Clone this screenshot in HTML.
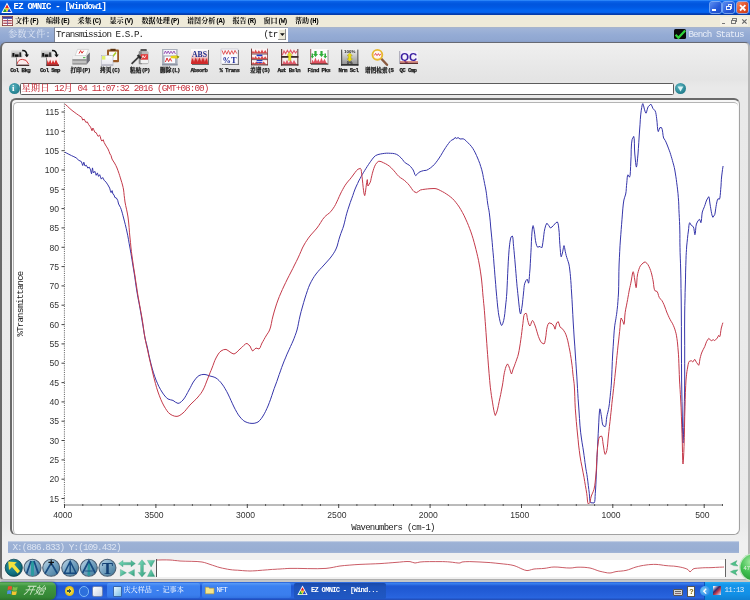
<!DOCTYPE html>
<html><head><meta charset="utf-8"><title>EZ OMNIC - [Window1]</title>
<style>
html,body{margin:0;padding:0}
body{width:750px;height:600px;overflow:hidden;position:relative;background:#c6c6c6;font-family:"Liberation Mono","Noto Serif CJK SC",monospace;}
.abs,#root div,#root span,#root svg{position:absolute}
#root{position:absolute;left:0;top:0;width:750px;height:600px;overflow:hidden;will-change:transform;opacity:0.9999}
#root span span{position:static}
.mono{font-family:"Liberation Mono","Noto Serif CJK SC",monospace}
.ax{font-family:"Liberation Sans",sans-serif;font-size:8.6px;fill:#333}
.t{white-space:nowrap;line-height:1}
.l{letter-spacing:-0.1em}
.mi .l{letter-spacing:-0.17em}
#title{left:0;top:0;width:750px;height:15px;background:linear-gradient(#3a94ff 0,#0a62e8 1.5px,#0055dd 4px,#0058e2 7px,#0466f2 11px,#0560ea 12.5px,#0038a8 14px,#0a3fae 15px)}
#menu{left:0;top:15px;width:750px;height:12px;background:#eeead9}
.mi{top:2.2px;font-size:7.1px;color:#000;white-space:nowrap;line-height:8px;font-weight:bold}
#param{left:0;top:27px;width:750px;height:23px;background:linear-gradient(#a8b4ca 0,#9fb3d7 2px,#94abd4 8px,#90a7d1 13px,#8499c3 16px)}
#main{left:0;top:42.3px;width:745.8px;height:536px;border-style:solid;border-color:#666973 #b6b6b6 #b0b0b0 #6a6a6a;border-width:1.8px 2px 1.6px 2px;border-radius:6px 5px 3px 4px;background:linear-gradient(#efefef 0,#e4e4e4 36px,#e9e9e9 44px,#ebebeb 480px,#f0f0f0 500px,#f0f0f0 100%)}
.tl{top:68px;font-size:5.7px;line-height:6px;font-weight:bold;color:#111;-webkit-text-stroke:0.25px #222;white-space:nowrap;transform-origin:0 0}
#panel{left:9.6px;top:98px;width:727.2px;height:434.4px;border-style:solid;border-color:#6a6a6a #a2a2a2 #a2a2a2 #6a6a6a;border-width:2px 1.3px 1.3px 2px;border-radius:6px;background:#f7f7f7}
#panel2{left:13.3px;top:102.3px;width:724.1px;height:430.7px;border-top:1.4px solid #b4b4b4;border-left:1.4px solid #b4b4b4;border-radius:4.5px;background:#fff}
#status{left:8px;top:540.6px;width:731px;height:12px;background:linear-gradient(#d0d9e8 0,#9cb1d5 1.6px,#98aed3 10px,#a4b6d6 12px)}
#task{left:0;top:581.6px;width:750px;height:18.4px;background:linear-gradient(#2a62d8 0,#3a80ee 1.6px,#2058d4 4px,#1f58d2 6px,#2762dc 14px,#2a66e0 16px,#1a48b8 17.3px,#4a72d0 18.4px)}
.tb{top:1.5px;height:15px;border-radius:2px;background:linear-gradient(#5a9cf8,#3c81f1 3px,#3a7eee 12px,#3272e0)}
.tbt{top:4.2px;font-size:7.1px;line-height:8px;color:#fff;white-space:nowrap}
</style></head><body><div id="root">

<div id="title">
 <svg style="left:1px;top:1.5px" width="12" height="12" viewBox="0 0 12 12"><polygon points="6,0.6 11.6,11 0.4,11" fill="#fff"/><polygon points="6,2.4 8,6.2 4,6.2" fill="#e02020"/><polygon points="4,6.2 6,10 1.9,10" fill="#22a030"/><polygon points="8,6.2 10.1,10 6,10" fill="#2040d0"/><polygon points="4,6.2 8,6.2 6,10" fill="#e8d020"/></svg>
 <span class="t" style="left:13.6px;top:3px;font-size:9px;font-weight:bold;color:#fff;letter-spacing:-0.78px">EZ OMNIC - [Window1]</span>
 <div style="left:709.5px;top:1.6px;width:11px;height:11.6px;border-radius:2px;background:linear-gradient(135deg,#5d8ef0,#2458d8 60%,#1e4cc4);box-shadow:0 0 0 0.7px #9fc0f8"><div style="left:2.4px;top:7.6px;width:4px;height:1.7px;background:#fff"></div></div>
 <div style="left:723.2px;top:1.6px;width:11px;height:11.6px;border-radius:2px;background:linear-gradient(135deg,#5d8ef0,#2458d8 60%,#1e4cc4);box-shadow:0 0 0 0.7px #9fc0f8"><div style="left:4.4px;top:2.6px;width:2.8px;height:2.4px;border:0.7px solid #dfe8fb;border-top-width:1.2px"></div><div style="left:2.8px;top:4.4px;width:2.8px;height:2.4px;border:0.7px solid #eef3fd;border-top-width:1.2px;background:#2c60dc"></div></div>
 <div style="left:737px;top:1.6px;width:11.4px;height:11.6px;border-radius:2px;background:linear-gradient(135deg,#f0906c,#e4532a 50%,#cc3c18);box-shadow:0 0 0 0.7px #c8c0e0"><svg style="left:0;top:0" width="11.4" height="11.6"><path d="M3,3.1 L8.4,8.5 M8.4,3.1 L3,8.5" stroke="#fff" stroke-width="1.8"/></svg></div>
</div>

<div id="menu">
 <svg style="left:1.5px;top:1px" width="11" height="10" viewBox="0 0 11 10"><rect x="0.3" y="0.3" width="10.4" height="9.4" fill="#fff" stroke="#7a2a2a" stroke-width="0.9"/><rect x="0.8" y="0.8" width="9.4" height="2" fill="#3b3f9e"/><rect x="1.2" y="4" width="8.6" height="1.3" fill="#b24a58"/><rect x="1.2" y="6.6" width="8.6" height="1.3" fill="#b24a58"/><line x1="5.5" y1="3" x2="5.5" y2="9.4" stroke="#7a5a90" stroke-width="0.8"/></svg>
 <span class="mi" style="left:15px">文件<span class="l">(F)</span></span>
 <span class="mi" style="left:46px">编辑<span class="l">(E)</span></span>
 <span class="mi" style="left:77.5px">采集<span class="l">(C)</span></span>
 <span class="mi" style="left:109.5px">显示<span class="l">(V)</span></span>
 <span class="mi" style="left:141.5px">数据处理<span class="l">(P)</span></span>
 <span class="mi" style="left:187px">谱图分析<span class="l">(A)</span></span>
 <span class="mi" style="left:232.5px">报告<span class="l">(R)</span></span>
 <span class="mi" style="left:263.5px">窗口<span class="l">(W)</span></span>
 <span class="mi" style="left:295px">帮助<span class="l">(H)</span></span>
 <div style="left:720px;top:1.5px;width:28px;height:9px;background:#f4f1e6"></div>
 <div style="left:721.6px;top:7.6px;width:3.4px;height:1.2px;background:#777"></div>
 <div style="left:732.4px;top:3px;width:2.8px;height:2.2px;border:0.7px solid #777;border-top-width:1.2px"></div>
 <div style="left:731px;top:4.6px;width:2.8px;height:2.2px;border:0.7px solid #777;border-top-width:1.2px;background:#f4f1e6"></div>
 <svg style="left:740.5px;top:2.6px" width="7" height="7"><path d="M1.2,1.4 L5.6,5.6 M5.6,1.4 L1.2,5.6" stroke="#666" stroke-width="1.2"/></svg>
</div>

<div id="param">
 <span class="t" style="left:8px;top:2.6px;font-size:9.3px;color:#dfe7f5">参数文件<span class="l">:</span></span>
 <div style="left:53.5px;top:-0.2px;width:233.5px;height:13.8px;background:#fff;border-top:0.8px solid #9aa0ac;border-left:0.8px solid #7b8396"></div>
 <span class="t" style="left:56px;top:3.2px;font-size:9.2px;color:#1a1a1a;letter-spacing:-0.93px">Transmission E.S.P.</span>
 <span class="t" style="left:263.5px;top:3.2px;font-size:9.2px;color:#1a1a1a;letter-spacing:-0.93px">(tr</span>
 <div style="left:277.8px;top:1.6px;width:8.6px;height:11px;background:#ece9d8;box-shadow:inset -0.8px -0.8px 0 #777,inset 0.8px 0.8px 0 #fff"><svg style="left:0;top:0" width="9" height="11"><polygon points="2,4.3 6.8,4.3 4.4,7" fill="#111"/></svg></div>
 <div style="left:673.5px;top:1.8px;width:12.6px;height:10.6px;background:#0a0a0a;border-radius:1.5px"><svg style="left:0;top:0" width="13" height="11"><path d="M1.6,5.8 L4.4,8.8 L11.2,1.4" stroke="#2fd23a" stroke-width="2.2" fill="none"/></svg></div>
 <span class="t" style="left:688.5px;top:3px;font-size:9.2px;color:#e9eef8;letter-spacing:-0.93px">Bench Status</span>
</div>

<div id="main"></div>
<svg style="left:0;top:44px" width="440" height="34" viewBox="0 44 440 34">
<defs>
<linearGradient id="gg" x1="0" y1="0" x2="0" y2="1"><stop offset="0" stop-color="#f2f2f2"/><stop offset="1" stop-color="#8a8a8a"/></linearGradient>
<linearGradient id="rg" x1="0" y1="0" x2="0" y2="1"><stop offset="0" stop-color="#ffffff"/><stop offset="0.5" stop-color="#f4d8d8"/><stop offset="1" stop-color="#d23a3a"/></linearGradient>
<linearGradient id="wg" x1="0" y1="0" x2="0" y2="1"><stop offset="0" stop-color="#ffffff"/><stop offset="1" stop-color="#e4e4ec"/></linearGradient>
</defs>
<!-- 1 Col Bkg -->
<g>
<rect x="11.2" y="49" width="11" height="8.4" fill="url(#gg)"/><rect x="12.4" y="53" width="2" height="3.6" fill="#111"/><rect x="15" y="54.4" width="3.6" height="2.4" fill="#111"/><rect x="19.4" y="52.4" width="1.6" height="4.4" fill="#222"/>
<path d="M22.2,50.6 Q26.6,50.2 26.8,55" stroke="#111" stroke-width="1.6" fill="none"/><polygon points="24.6,54.4 29,54.4 26.8,57.6" fill="#111"/>
<rect x="16.2" y="57.4" width="13" height="8" fill="#fbeaea"/><path d="M17,64 Q18.5,59 22.5,59.4 Q26.5,59 28.6,64" stroke="#d03a3a" stroke-width="1" fill="none"/><rect x="16.2" y="64.6" width="13" height="1.4" fill="#4a3030"/><rect x="16.2" y="57.4" width="0.8" height="8.6" fill="#666"/>
</g>
<!-- 2 Col Smp -->
<g>
<rect x="41" y="49" width="11" height="8.4" fill="url(#gg)"/><rect x="42.2" y="53" width="2" height="3.6" fill="#111"/><rect x="44.8" y="54.4" width="3.6" height="2.4" fill="#111"/><rect x="49.2" y="52.4" width="1.6" height="4.4" fill="#222"/>
<path d="M52,50.6 Q56.4,50.2 56.6,55" stroke="#111" stroke-width="1.6" fill="none"/><polygon points="54.4,54.4 58.8,54.4 56.6,57.6" fill="#111"/>
<rect x="46" y="57.4" width="13" height="8" fill="#fbeaea"/><polygon points="46.6,64.8 47.6,60 48.8,63 50.2,59.4 51.6,63.4 53,60 54.4,63 56,59.6 57.4,62.6 58.6,64.8" fill="#d42a2a"/><rect x="46" y="64.4" width="13" height="1.6" fill="#7a2020"/><rect x="46" y="57.4" width="0.8" height="8.6" fill="#666"/>
</g>
<!-- 3 print -->
<g>
<polygon points="77.6,49.4 88.4,49.4 86,55.6 75.2,55.6" fill="#fdfdfd" stroke="#aaa" stroke-width="0.4"/><path d="M79,53.6 L80.6,50.6 L82,53.2 L83.6,50.8" stroke="#d83030" stroke-width="1" fill="none"/>
<polygon points="72.4,56 86.6,56 89.8,52.6 89.8,60.4 86.6,64.6 72.4,64.6" fill="#c9c9c9"/><rect x="72.4" y="56" width="14.2" height="3" fill="#f0f0f0"/><rect x="72.4" y="59" width="14.2" height="5.6" fill="#9c9c9c"/><rect x="72.4" y="61.4" width="14.2" height="1.2" fill="#d8d8d8"/><polygon points="86.6,56 89.8,52.6 89.8,60.4 86.6,64.6" fill="#6f6f78"/><rect x="83" y="57" width="2.4" height="1.2" fill="#58c058"/>
</g>
<!-- 4 copy -->
<g>
<rect x="107" y="49.6" width="12" height="12.6" rx="1" fill="#9a5a24"/><rect x="110.4" y="48.8" width="5.2" height="2" fill="#5a3410"/><rect x="109" y="51.6" width="8.2" height="8.4" fill="#fbfbfb"/><path d="M109.6,55.4 L112,57.4 L116,52.6" stroke="#a8d020" stroke-width="1.6" fill="none"/>
<rect x="101.4" y="55.4" width="11.6" height="10.4" fill="url(#wg)" stroke="#a8a8b8" stroke-width="0.5"/><rect x="102" y="56" width="3.4" height="3.6" fill="#dff06a"/><rect x="101.4" y="64.2" width="11.6" height="1.6" fill="#b8b8c4"/>
</g>
<!-- 5 paste -->
<g>
<rect x="140.4" y="49" width="6.4" height="2.6" rx="0.8" fill="#555"/><rect x="138.8" y="51.2" width="9.8" height="13" rx="1.4" fill="#b9b9b9"/><rect x="138.8" y="51.2" width="3" height="13" fill="#8c8c8c"/><rect x="140.6" y="54.2" width="7.4" height="5.6" fill="#e23a3a"/><path d="M141.6,58.6 L143,55.6 L144.4,58 L146,55.4" stroke="#fff" stroke-width="0.8" fill="none"/><rect x="140.6" y="59.8" width="7.4" height="3.2" fill="#f2f2f2"/>
<path d="M131.6,63.8 L139.6,56.2" stroke="#3c3c3c" stroke-width="1.8"/><path d="M137.6,55 L141,58.4" stroke="#2c2c2c" stroke-width="2.2"/>
</g>
<!-- 6 delete -->
<g>
<rect x="162" y="49" width="15.6" height="16.4" fill="#aab0bc"/><rect x="163.4" y="50" width="12.8" height="5.4" fill="#f4f4fa"/><path d="M164,54 L165.4,51 L166.8,53.6 L168.2,51 L169.6,53.8 L171,51.2 L172.4,53.6 L174,51 L175.4,54" stroke="#8a3aa8" stroke-width="0.8" fill="none"/>
<rect x="164.6" y="56.6" width="10.4" height="6.6" fill="#fbfbff"/><path d="M165.4,62 L167,58 L168.6,61.6 L170.2,58.4 L171.6,61.4" stroke="#e03030" stroke-width="1" fill="none"/><rect x="162" y="63.8" width="15.6" height="1.6" fill="#8e94a4"/>
<polygon points="170.6,56 177.4,55.4 179.4,56.8 177.6,58.4 170.8,58.2" fill="#e8d21a"/><polygon points="176.6,55.4 179.4,56.8 177.6,58.4" fill="#7a8a20"/>
</g>
<!-- 7 ABS -->
<g>
<rect x="192" y="50" width="17" height="15" fill="#6a6a6a"/><rect x="191" y="49" width="17" height="15" fill="url(#rg)"/>
<polygon points="191,64 192.4,58 194,62 195.8,57.4 197.6,62 199.4,57.6 201.2,62 203,57.4 204.8,62 206.6,58 208,64" fill="#d02a2a"/>
<text x="199.5" y="57" text-anchor="middle" font-family="Liberation Serif,serif" font-weight="bold" font-size="7.8" fill="#1c2a8a" textLength="15" lengthAdjust="spacingAndGlyphs">ABS</text>
</g>
<!-- 8 %T -->
<g>
<rect x="222" y="50" width="17" height="15" fill="#6a6a6a"/><rect x="221" y="49" width="17" height="15" fill="#fafafc" stroke="#b0b0c0" stroke-width="0.5"/>
<path d="M222,50.4 L223.6,54.4 L225.2,50.6 L226.8,54.2 L228.4,50.4 L230,54.4 L231.8,50.6 L233.4,54.2 L235,50.4 L236.8,53.6" stroke="#e04848" stroke-width="0.9" fill="none"/>
<text x="229.6" y="63" text-anchor="middle" font-family="Liberation Serif,serif" font-weight="bold" font-size="9" fill="#1c2a9a" textLength="14" lengthAdjust="spacingAndGlyphs">%T</text>
</g>
<!-- 9 subtract -->
<g>
<rect x="251" y="48.6" width="17" height="16.6" fill="#fbf4f4"/><rect x="251" y="48.6" width="1" height="16.6" fill="#7a4040"/><rect x="267" y="48.6" width="1" height="16.6" fill="#a06060"/>
<g fill="#d84a4a"><polygon points="251.6,53.6 252.8,50.4 254.2,52.4 255.6,49.6 257.2,52.6 258.8,50.2 260.4,52.6 262,49.4 263.6,52.4 265.2,50 266.6,52.2 267.4,53.6"/><polygon points="251.6,59.2 252.8,56.4 254.2,58.2 255.6,56 257.2,58.4 258.8,56.4 260.4,58.4 262,55.8 263.6,58.2 265.2,56.2 267.4,59.2"/><polygon points="251.6,64.6 253,62 254.6,63.6 256.4,61.4 258.2,63.6 260,61.8 262,63.6 263.6,61.4 265.4,63.4 267.4,64.6"/></g>
<rect x="251" y="53.6" width="17" height="0.9" fill="#6a4a4a"/><rect x="251" y="59.2" width="17" height="0.9" fill="#6a4a4a"/><rect x="251" y="64.4" width="17" height="1" fill="#5a3030"/>
<rect x="256.6" y="54.6" width="5.8" height="1.6" fill="#2038c8"/><rect x="256.6" y="60" width="5.8" height="1" fill="#2038c8"/><rect x="256.6" y="61.8" width="5.8" height="1" fill="#2038c8"/>
</g>
<!-- 10 Aut Bsln -->
<g>
<rect x="281" y="49" width="17.4" height="16.6" fill="#f6eeee"/><rect x="281" y="49" width="1.2" height="16.6" fill="#6a4040"/><rect x="297.2" y="49" width="1.2" height="16.6" fill="#6a5050"/>
<path d="M282.4,55 L284,51 L285.6,53.6 L287.4,50.4 L289,53 L290.6,50.2 L292.4,53.4 L294,50.6 L295.6,53 L297,51" stroke="#e05a6a" stroke-width="1.1" fill="none"/>
<rect x="281" y="56" width="17.4" height="1.8" fill="#3a2a2a"/>
<polygon points="282.4,64.6 283.8,60.4 285.4,63 287,59.8 288.8,63.2 290.6,59.6 292.4,63 294,60 295.6,62.8 297,64.6" fill="#e05a6a"/>
<rect x="281" y="64.2" width="17.4" height="1.4" fill="#5a2a2a"/>
<polygon points="289.6,52 292.4,55.4 291,55.4 291,60.6 288.4,60.6 288.4,55.4 287,55.4" fill="#e8e020" stroke="#a8a020" stroke-width="0.3"/>
</g>
<!-- 11 Find Pks -->
<g>
<rect x="311" y="50" width="17.4" height="15" fill="#777"/><rect x="310.2" y="49" width="17.4" height="15" fill="#fdfbfb"/><rect x="310.2" y="49" width="1" height="15" fill="#8a5a5a"/>
<polygon points="311.2,64 312.4,59.6 313.8,62 315.4,57.6 317,61.6 318.4,59 319.8,62 321.4,57.4 323,61.6 324.6,58.8 326,62 327.4,64" fill="#e05060"/>
<g fill="#2fae3a"><polygon points="314.4,51 316.6,51 316.6,54 318,54 315.5,57 313,54 314.4,54"/><polygon points="320.4,51 322.6,51 322.6,54 324,54 321.5,57 319,54 320.4,54"/><polygon points="324.4,53.4 326,53.4 326,56 327.2,56 325.2,58.4 323.4,56 324.4,56"/><polygon points="311.6,53.4 313,53.4 313,56 314,56 312.3,58.4 310.8,56 311.6,56"/></g>
<rect x="310.2" y="63" width="17.4" height="1" fill="#8a3a3a"/>
</g>
<!-- 12 Nrm Scl -->
<g>
<rect x="341" y="49.6" width="17.4" height="16" fill="url(#gg)"/><rect x="341" y="49.6" width="1.2" height="16" fill="#555"/><rect x="357.2" y="49.6" width="1.2" height="16" fill="#666"/><rect x="341" y="64" width="17.4" height="1.6" fill="#333"/>
<text x="349.7" y="52.6" text-anchor="middle" font-family="Liberation Sans,sans-serif" font-weight="bold" font-size="4.4" fill="#222">100%</text>
<text x="349.7" y="64.4" text-anchor="middle" font-family="Liberation Sans,sans-serif" font-weight="bold" font-size="4" fill="#222">0%</text>
<polygon points="349.7,53 352.4,55.6 351,55.6 351,58.8 352.4,58.8 349.7,61.6 347,58.8 348.4,58.8 348.4,55.6 347,55.6" fill="#f0e010" stroke="#a09010" stroke-width="0.4"/>
</g>
<!-- 13 search -->
<g>
<path d="M381.6,59 L387,64.8" stroke="#8a5a40" stroke-width="2.4" stroke-linecap="round"/>
<circle cx="377.4" cy="54.8" r="4.9" fill="#fff6f2" stroke="#e8b830" stroke-width="1.9"/>
<path d="M374.4,55.4 L375.6,53.4 L377,55.6 L378.4,53.6 L379.6,55.6 L380.8,53.8" stroke="#e03a4a" stroke-width="0.9" fill="none"/>

</g>
<!-- 14 QC -->
<g>
<rect x="399.4" y="51" width="18.6" height="13" fill="#f4f0fa"/><rect x="399.4" y="51" width="0.8" height="13" fill="#8a8a9a"/>
<text x="408.8" y="61.2" text-anchor="middle" font-family="Liberation Sans,sans-serif" font-weight="bold" font-size="11.6" fill="#3a1ea0" textLength="17" lengthAdjust="spacingAndGlyphs">QC</text>
<rect x="400" y="61.4" width="18" height="1.2" fill="#c8503a"/><rect x="400" y="62.8" width="18" height="1.2" fill="#5a3030"/>
</g>
</svg>
<span class="tl" style="left:10.2px"><span class="l">Col Bkg</span></span>
<span class="tl" style="left:40px"><span class="l">Col Smp</span></span>
<span class="tl" style="left:70.4px">打印<span class="l">(P)</span></span>
<span class="tl" style="left:100px">拷贝<span class="l">(C)</span></span>
<span class="tl" style="left:130px">粘贴<span class="l">(P)</span></span>
<span class="tl" style="left:160px">删除<span class="l">(L)</span></span>
<span class="tl" style="left:190.4px"><span class="l">Absorb</span></span>
<span class="tl" style="left:219.4px"><span class="l">% Trans</span></span>
<span class="tl" style="left:250px">差谱<span class="l">(S)</span></span>
<span class="tl" style="left:277.4px"><span class="l">Aut Bsln</span></span>
<span class="tl" style="left:307.4px"><span class="l">Find Pks</span></span>
<span class="tl" style="left:338.4px"><span class="l">Nrm Scl</span></span>
<span class="tl" style="left:365px">谱图检索<span class="l">(S</span></span>
<span class="tl" style="left:399.4px"><span class="l">QC Cmp</span></span>


<div style="left:8.6px;top:82.6px;width:11px;height:11px;border-radius:6px;background:radial-gradient(circle at 40% 35%,#5ab4c0,#2a8796 60%,#1c6a78)"><span class="t" style="left:3.4px;top:1px;font-size:9px;font-weight:bold;color:#fff;font-family:'Liberation Serif',serif">i</span></div>
<div style="left:20.4px;top:83px;width:651.6px;height:9.8px;background:#fff;border:1px solid #5c5c5c;border-radius:1.5px"></div>
<span class="t" style="left:21.5px;top:84px;font-size:9.35px;font-weight:500;color:#c8323e">星期日<span class="l"> 12</span>月<span class="l"> 04 11:07:32 2016 (GMT+08:00)</span></span>
<div style="left:674.8px;top:82.8px;width:11px;height:11px;border-radius:6px;background:radial-gradient(circle at 40% 35%,#62b8c2,#2a8796 60%,#1c6a78)"><svg style="left:0;top:0" width="11" height="11"><polygon points="2.6,3.6 8.4,3.6 5.5,8.4" fill="#d9f4f6"/></svg></div>

<div id="panel"></div><div id="panel2"></div>

<div id="status"><span class="t" style="left:4.4px;top:2.2px;font-size:9.4px;color:#dde5f3;letter-spacing:-0.92px">X:(886.833) Y:(109.432)</span></div>

<div style="left:156px;top:559px;width:1px;height:18px;background:#555"></div>
<div style="left:157px;top:559.5px;width:568px;height:17px;background:#fff"></div>
<div style="left:725px;top:559px;width:1px;height:18px;background:#666"></div>
<svg style="left:0;top:555px" width="160" height="26" viewBox="0 555 160 26">
<defs>
<radialGradient id="bg1" cx="0.4" cy="0.35" r="0.7"><stop offset="0" stop-color="#2e97a6"/><stop offset="0.7" stop-color="#0f6f7e"/><stop offset="1" stop-color="#0a4f5c"/></radialGradient>
<linearGradient id="bg2" x1="0" y1="0" x2="1" y2="1"><stop offset="0" stop-color="#c4dcea"/><stop offset="0.45" stop-color="#7aa6c4"/><stop offset="1" stop-color="#3a7496"/></linearGradient>
<linearGradient id="gr" x1="0" y1="0" x2="1" y2="1"><stop offset="0" stop-color="#7fe0c0"/><stop offset="1" stop-color="#2f9a7a"/></linearGradient>
</defs>
<circle cx="13.8" cy="567.8" r="8.6" fill="url(#bg1)" stroke="#0a4450" stroke-width="0.8"/>
<polygon points="8.2,561.6 16.8,562.2 14.4,564.6 20,571 17.6,573.4 12,567 9,570" fill="#f4e23c"/>
<g stroke="#4a5e72" stroke-width="1.1">
<circle cx="32.5" cy="567.8" r="8.5" fill="url(#bg2)"/><circle cx="51.2" cy="567.8" r="8.5" fill="url(#bg2)"/><circle cx="70.2" cy="567.8" r="8.5" fill="url(#bg2)"/><circle cx="88.8" cy="567.8" r="8.5" fill="url(#bg2)"/><circle cx="107.4" cy="567.8" r="8.5" fill="url(#bg2)"/>
</g>
<rect x="31" y="561" width="3" height="14.6" fill="#2a9aa0"/>
<path d="M26.6,573.6 L31,561 M34,561 L38.4,573.6" stroke="#174a80" stroke-width="1.7" fill="none"/>
<path d="M45,573.6 L51.2,563 L57.4,573.6" stroke="#174a80" stroke-width="1.7" fill="none"/>
<path d="M48.4,562.4 L54,562.4 M51.2,559.8 L51.2,565.2" stroke="#111" stroke-width="1.1"/>
<path d="M64.4,573 L70.2,561.4 L76,573 M70.2,561.4 L70.2,573 M63.6,573.2 L76.8,573.2" stroke="#174a80" stroke-width="1.5" fill="none"/>
<rect x="87.6" y="562" width="2.6" height="13.6" fill="#2a9aa0"/>
<path d="M82.6,573 L88.9,560.8 L95.2,573" stroke="#174a80" stroke-width="1.7" fill="none"/><path d="M85,571 L92.8,571" stroke="#1a4f86" stroke-width="0.9"/>
<text x="107.4" y="573.6" text-anchor="middle" font-family="Liberation Serif,serif" font-weight="bold" font-size="16.5" fill="#123f74">T</text>
<g fill="url(#gr)" stroke="#2a8a6a" stroke-width="0.3">
<polygon points="118.6,563.6 123,560.4 123,562.4 131,562.4 131,560.4 135.4,563.6 131,566.8 131,564.8 123,564.8 123,566.8"/>
<polygon points="120.4,569.4 126.4,572.8 120.4,576.2"/><polygon points="134.4,569.4 128.4,572.8 134.4,576.2"/>
<polygon points="142,559.8 145.8,564.4 143.4,564.4 143.4,572.4 145.8,572.4 142,577 138.2,572.4 140.6,572.4 140.6,564.4 138.2,564.4"/>
<polygon points="147.4,560.4 154.8,560.4 151.1,567"/><polygon points="147.4,576.4 154.8,576.4 151.1,569.6"/>
</g>
</svg>
<svg style="left:726px;top:552px" width="24" height="30" viewBox="726 552 24 30">
<defs><radialGradient id="gb" cx="0.4" cy="0.3" r="0.8"><stop offset="0" stop-color="#9fe89f"/><stop offset="0.5" stop-color="#3fbf4f"/><stop offset="1" stop-color="#1f8f2f"/></radialGradient></defs>
<g fill="#4fc08a" stroke="#2a8a5a" stroke-width="0.3"><polygon points="730.4,564 737,560.6 735.6,563.4 738,566 733.6,565.6"/><polygon points="730.4,571.8 737,575.2 735.6,572.4 738,569.8 733.6,570.2"/></g>
<circle cx="753.4" cy="567.3" r="13.6" fill="url(#gb)" stroke="#c4e8c4" stroke-width="1.3"/>
<text x="746.8" y="569.6" text-anchor="middle" font-family="Liberation Sans,sans-serif" font-size="5.8" fill="#e4f2e4">47</text>
</svg>


<svg id="chart" width="750" height="600" viewBox="0 0 750 600">
<line x1="64.4" y1="103.5" x2="64.4" y2="506" stroke="#666" stroke-width="1" stroke-dasharray="1.1,1.1"/>
<line x1="64" y1="505" x2="723" y2="505" stroke="#777" stroke-width="1"/>
<line x1="61.5" y1="498.5" x2="64.5" y2="498.5" stroke="#444" stroke-width="1"/><text x="59" y="501.7" text-anchor="end" class="ax">15</text><line x1="61.5" y1="479.2" x2="64.5" y2="479.2" stroke="#444" stroke-width="1"/><text x="59" y="482.4" text-anchor="end" class="ax">20</text><line x1="61.5" y1="459.9" x2="64.5" y2="459.9" stroke="#444" stroke-width="1"/><text x="59" y="463.1" text-anchor="end" class="ax">25</text><line x1="61.5" y1="440.5" x2="64.5" y2="440.5" stroke="#444" stroke-width="1"/><text x="59" y="443.7" text-anchor="end" class="ax">30</text><line x1="61.5" y1="421.2" x2="64.5" y2="421.2" stroke="#444" stroke-width="1"/><text x="59" y="424.4" text-anchor="end" class="ax">35</text><line x1="61.5" y1="401.9" x2="64.5" y2="401.9" stroke="#444" stroke-width="1"/><text x="59" y="405.1" text-anchor="end" class="ax">40</text><line x1="61.5" y1="382.6" x2="64.5" y2="382.6" stroke="#444" stroke-width="1"/><text x="59" y="385.8" text-anchor="end" class="ax">45</text><line x1="61.5" y1="363.2" x2="64.5" y2="363.2" stroke="#444" stroke-width="1"/><text x="59" y="366.4" text-anchor="end" class="ax">50</text><line x1="61.5" y1="343.9" x2="64.5" y2="343.9" stroke="#444" stroke-width="1"/><text x="59" y="347.1" text-anchor="end" class="ax">55</text><line x1="61.5" y1="324.6" x2="64.5" y2="324.6" stroke="#444" stroke-width="1"/><text x="59" y="327.8" text-anchor="end" class="ax">60</text><line x1="61.5" y1="305.2" x2="64.5" y2="305.2" stroke="#444" stroke-width="1"/><text x="59" y="308.4" text-anchor="end" class="ax">65</text><line x1="61.5" y1="285.9" x2="64.5" y2="285.9" stroke="#444" stroke-width="1"/><text x="59" y="289.1" text-anchor="end" class="ax">70</text><line x1="61.5" y1="266.6" x2="64.5" y2="266.6" stroke="#444" stroke-width="1"/><text x="59" y="269.8" text-anchor="end" class="ax">75</text><line x1="61.5" y1="247.3" x2="64.5" y2="247.3" stroke="#444" stroke-width="1"/><text x="59" y="250.5" text-anchor="end" class="ax">80</text><line x1="61.5" y1="227.9" x2="64.5" y2="227.9" stroke="#444" stroke-width="1"/><text x="59" y="231.1" text-anchor="end" class="ax">85</text><line x1="61.5" y1="208.6" x2="64.5" y2="208.6" stroke="#444" stroke-width="1"/><text x="59" y="211.8" text-anchor="end" class="ax">90</text><line x1="61.5" y1="189.3" x2="64.5" y2="189.3" stroke="#444" stroke-width="1"/><text x="59" y="192.5" text-anchor="end" class="ax">95</text><line x1="61.5" y1="170.0" x2="64.5" y2="170.0" stroke="#444" stroke-width="1"/><text x="59" y="173.2" text-anchor="end" class="ax">100</text><line x1="61.5" y1="150.7" x2="64.5" y2="150.7" stroke="#444" stroke-width="1"/><text x="59" y="153.8" text-anchor="end" class="ax">105</text><line x1="61.5" y1="131.3" x2="64.5" y2="131.3" stroke="#444" stroke-width="1"/><text x="59" y="134.5" text-anchor="end" class="ax">110</text><line x1="61.5" y1="112.0" x2="64.5" y2="112.0" stroke="#444" stroke-width="1"/><text x="59" y="115.2" text-anchor="end" class="ax">115</text><line x1="64.5" y1="504" x2="64.5" y2="508" stroke="#444" stroke-width="1"/><text x="62.7" y="517.5" text-anchor="middle" class="ax">4000</text><line x1="82.8" y1="504" x2="82.8" y2="506" stroke="#555" stroke-width="1"/><line x1="101.1" y1="504" x2="101.1" y2="506" stroke="#555" stroke-width="1"/><line x1="119.3" y1="504" x2="119.3" y2="506" stroke="#555" stroke-width="1"/><line x1="137.6" y1="504" x2="137.6" y2="506" stroke="#555" stroke-width="1"/><line x1="155.9" y1="504" x2="155.9" y2="508" stroke="#444" stroke-width="1"/><text x="154.1" y="517.5" text-anchor="middle" class="ax">3500</text><line x1="174.2" y1="504" x2="174.2" y2="506" stroke="#555" stroke-width="1"/><line x1="192.4" y1="504" x2="192.4" y2="506" stroke="#555" stroke-width="1"/><line x1="210.7" y1="504" x2="210.7" y2="506" stroke="#555" stroke-width="1"/><line x1="229.0" y1="504" x2="229.0" y2="506" stroke="#555" stroke-width="1"/><line x1="247.3" y1="504" x2="247.3" y2="508" stroke="#444" stroke-width="1"/><text x="245.5" y="517.5" text-anchor="middle" class="ax">3000</text><line x1="265.6" y1="504" x2="265.6" y2="506" stroke="#555" stroke-width="1"/><line x1="283.8" y1="504" x2="283.8" y2="506" stroke="#555" stroke-width="1"/><line x1="302.1" y1="504" x2="302.1" y2="506" stroke="#555" stroke-width="1"/><line x1="320.4" y1="504" x2="320.4" y2="506" stroke="#555" stroke-width="1"/><line x1="338.7" y1="504" x2="338.7" y2="508" stroke="#444" stroke-width="1"/><text x="336.9" y="517.5" text-anchor="middle" class="ax">2500</text><line x1="356.9" y1="504" x2="356.9" y2="506" stroke="#555" stroke-width="1"/><line x1="375.2" y1="504" x2="375.2" y2="506" stroke="#555" stroke-width="1"/><line x1="393.5" y1="504" x2="393.5" y2="506" stroke="#555" stroke-width="1"/><line x1="411.8" y1="504" x2="411.8" y2="506" stroke="#555" stroke-width="1"/><line x1="430.1" y1="504" x2="430.1" y2="508" stroke="#444" stroke-width="1"/><text x="428.3" y="517.5" text-anchor="middle" class="ax">2000</text><line x1="448.3" y1="504" x2="448.3" y2="506" stroke="#555" stroke-width="1"/><line x1="466.6" y1="504" x2="466.6" y2="506" stroke="#555" stroke-width="1"/><line x1="484.9" y1="504" x2="484.9" y2="506" stroke="#555" stroke-width="1"/><line x1="503.2" y1="504" x2="503.2" y2="506" stroke="#555" stroke-width="1"/><line x1="521.5" y1="504" x2="521.5" y2="508" stroke="#444" stroke-width="1"/><text x="519.7" y="517.5" text-anchor="middle" class="ax">1500</text><line x1="539.7" y1="504" x2="539.7" y2="506" stroke="#555" stroke-width="1"/><line x1="558.0" y1="504" x2="558.0" y2="506" stroke="#555" stroke-width="1"/><line x1="576.3" y1="504" x2="576.3" y2="506" stroke="#555" stroke-width="1"/><line x1="594.6" y1="504" x2="594.6" y2="506" stroke="#555" stroke-width="1"/><line x1="612.8" y1="504" x2="612.8" y2="508" stroke="#444" stroke-width="1"/><text x="611.0" y="517.5" text-anchor="middle" class="ax">1000</text><line x1="631.1" y1="504" x2="631.1" y2="506" stroke="#555" stroke-width="1"/><line x1="649.4" y1="504" x2="649.4" y2="506" stroke="#555" stroke-width="1"/><line x1="667.7" y1="504" x2="667.7" y2="506" stroke="#555" stroke-width="1"/><line x1="686.0" y1="504" x2="686.0" y2="506" stroke="#555" stroke-width="1"/><line x1="704.2" y1="504" x2="704.2" y2="508" stroke="#444" stroke-width="1"/><text x="702.4" y="517.5" text-anchor="middle" class="ax">500</text><line x1="722.5" y1="504" x2="722.5" y2="506" stroke="#555" stroke-width="1"/>
<polyline points="65.0,152.3 66.2,152.9 68.9,154.3 71.5,155.6 73.9,156.7 76.1,157.8 78.9,160.4 81.3,161.5 82.1,163.8 82.7,165.5 83.8,162.2 85.0,166.0 86.4,165.3 87.8,168.1 89.2,167.1 90.6,169.9 91.1,172.3 91.5,173.8 92.0,170.8 92.5,167.9 92.9,170.4 93.4,173.0 94.8,171.3 95.5,173.3 96.2,175.3 97.4,172.9 98.5,176.4 99.7,174.7 100.5,176.9 101.3,179.1 102.7,177.5 104.1,180.2 106.0,182.1 107.9,184.9 109.7,188.1 110.4,190.8 111.1,192.6 112.1,190.6 113.0,194.2 113.9,194.7 114.9,197.5 116.3,197.9 117.7,200.3 118.6,204.0 120.5,207.5 121.3,209.7 122.0,212.0 122.5,213.8 123.0,215.8 123.6,218.0 124.4,221.1 125.3,224.6 126.2,228.3 127.0,232.0 127.8,235.8 128.5,239.7 129.2,243.7 130.0,248.0 131.0,253.7 132.0,259.8 133.0,266.0 134.0,272.0 134.8,277.1 135.5,282.1 136.2,287.0 137.0,292.0 137.9,297.4 139.0,302.9 140.0,308.4 141.0,314.0 142.0,320.2 143.1,326.7 144.1,332.9 145.0,338.0 145.5,340.2 146.0,342.1 146.5,343.9 147.0,346.0 147.9,350.0 148.8,354.6 149.9,359.4 151.0,364.0 152.1,368.1 153.3,372.2 154.6,376.2 156.0,380.0 157.4,383.2 158.8,386.4 160.4,389.3 162.0,392.0 163.4,394.1 164.9,396.0 166.4,397.7 168.0,399.0 170.5,399.8 173.0,400.4 175.5,402.2 178.0,403.4 179.7,402.9 181.4,401.6 183.0,400.0 184.6,397.9 186.1,395.4 187.6,392.6 189.0,390.0 190.3,387.7 191.5,385.3 192.7,383.0 194.0,381.0 195.6,378.9 197.2,377.0 199.0,375.6 201.4,374.7 204.0,374.4 206.0,374.7 208.0,375.3 210.0,376.0 212.0,376.5 214.1,377.1 216.0,378.0 217.6,379.2 219.1,380.6 220.6,382.2 222.0,384.0 223.6,386.2 225.1,388.7 226.6,391.3 228.0,394.0 229.5,397.2 231.0,400.5 232.5,403.8 234.0,407.0 235.4,409.7 236.9,412.4 238.4,414.9 240.0,417.0 241.6,418.8 243.2,420.4 245.0,421.6 247.2,422.5 249.6,423.2 252.0,423.4 254.1,423.3 256.1,422.8 258.0,422.0 259.8,420.4 261.5,418.3 263.0,416.0 264.3,413.8 265.6,411.3 266.8,408.7 268.0,406.0 269.3,402.7 270.6,399.2 271.8,395.6 273.0,392.0 274.2,388.5 275.5,385.0 276.8,381.5 278.0,378.0 279.2,374.5 280.5,370.9 281.7,367.4 283.0,364.0 284.2,360.9 285.5,357.9 286.7,354.9 288.0,352.0 289.3,349.2 290.5,346.5 291.8,343.7 293.0,341.0 294.1,338.3 295.1,335.6 296.1,332.9 297.0,330.0 297.8,326.7 298.5,323.2 299.2,319.7 300.0,316.0 301.1,311.6 302.4,307.0 303.7,302.4 305.0,298.0 306.2,294.3 307.4,290.7 308.6,287.3 310.0,284.0 311.4,281.3 312.8,278.8 314.3,276.4 316.0,274.0 317.9,271.7 319.9,269.4 322.0,267.2 324.0,265.0 325.8,263.0 327.6,261.0 329.4,259.0 331.0,257.0 332.4,255.1 333.7,253.2 334.9,251.2 336.0,249.0 337.2,246.0 338.1,242.6 339.0,239.2 340.0,236.0 340.9,233.4 341.8,231.0 342.7,228.6 343.6,226.0 344.4,222.9 345.2,219.7 345.9,216.5 346.8,213.2 347.9,209.6 349.1,206.0 350.3,202.4 351.6,198.8 352.8,195.5 353.9,192.2 355.1,189.0 356.4,186.0 357.6,183.5 358.7,181.0 360.0,178.7 361.2,176.4 362.4,174.3 363.6,172.3 364.8,170.3 366.0,168.4 367.2,166.5 368.4,164.7 369.6,162.9 370.8,161.2 372.3,159.1 373.9,157.1 375.6,155.6 377.9,154.6 380.4,154.0 382.2,153.7 384.3,153.4 386.4,153.2 388.4,153.2 390.5,153.3 392.6,153.4 394.6,153.7 396.4,154.3 398.2,155.3 399.7,156.6 401.2,158.0 402.6,159.6 403.8,161.3 405.2,162.8 407.2,164.0 409.2,165.2 410.6,166.6 412.0,168.3 413.2,170.0 414.1,172.2 414.8,174.4 415.6,175.6 417.1,174.4 418.8,172.4 421.2,171.3 423.6,170.6 426.4,170.3 428.4,169.3 430.6,167.8 432.8,166.0 434.5,164.3 436.1,162.3 437.7,160.2 439.2,158.0 440.8,155.5 442.4,152.8 444.0,150.1 445.6,147.6 447.0,145.5 448.5,143.5 449.9,141.7 451.2,140.4 454.0,139.0 455.0,137.5 456.8,138.5 458.0,137.5 460.0,139.0 463.2,138.8 464.8,139.7 466.4,141.2 468.0,142.8 469.7,144.5 471.3,146.3 472.8,148.4 474.1,150.6 475.3,152.9 476.5,155.5 477.6,158.0 478.7,160.7 479.8,163.5 480.7,166.4 481.6,169.2 482.3,172.0 482.9,174.7 483.4,177.5 484.0,180.4 484.6,183.6 485.3,186.8 485.9,190.1 486.4,193.2 486.7,195.7 487.0,198.2 487.3,200.6 487.6,203.0 488.0,205.4 488.4,207.7 488.9,210.1 489.3,212.8 489.8,217.1 490.3,221.9 490.7,227.0 491.2,232.0 491.7,237.1 492.2,242.3 492.6,247.5 493.1,252.8 493.6,258.4 494.0,264.1 494.5,269.8 494.9,275.2 495.3,279.9 495.7,284.4 496.0,288.8 496.4,293.0 496.7,296.4 497.0,299.6 497.3,302.8 497.6,306.0 498.0,309.3 498.4,312.7 498.9,315.9 499.5,318.8 500.1,321.7 500.9,324.3 501.6,325.5 502.7,323.8 503.7,320.4 504.3,317.3 504.8,313.6 505.2,309.7 505.6,306.0 505.9,302.8 506.3,299.7 506.5,296.5 506.8,293.0 507.1,287.1 507.4,280.5 507.7,273.7 508.0,267.2 508.3,261.2 508.7,255.2 509.1,249.6 509.6,244.8 509.9,242.3 510.3,240.0 510.7,238.1 511.2,236.8 512.3,236.0 512.8,237.2 513.1,239.9 513.3,243.2 513.6,246.4 514.0,250.5 514.4,254.9 514.8,259.4 515.2,264.0 515.6,268.8 516.0,273.7 516.4,278.6 516.8,283.2 517.1,286.8 517.5,290.2 517.8,293.5 518.2,297.0 518.7,301.9 519.3,307.5 519.9,312.1 520.5,314.0 520.9,313.2 521.3,311.1 521.7,308.5 522.1,306.0 522.5,302.9 522.8,299.6 523.2,296.2 523.5,293.0 523.8,290.3 524.0,287.7 524.3,285.3 524.8,283.2 526.0,280.5 527.2,279.2 527.9,281.2 528.5,283.2 528.9,282.2 529.1,279.8 529.4,276.7 529.6,273.6 530.0,269.0 530.3,263.7 530.6,258.2 530.9,252.8 531.2,247.3 531.4,241.7 531.7,236.4 532.0,232.0 532.3,229.1 532.7,226.6 533.1,225.6 533.5,226.7 534.0,229.3 534.4,232.0 534.8,234.7 535.1,237.8 535.5,240.7 536.0,243.2 536.7,245.7 537.6,247.2 540.0,246.4 541.6,248.0 542.1,247.0 542.5,245.0 542.9,242.4 543.2,240.0 543.6,237.2 543.9,234.3 544.3,231.4 544.8,228.8 545.8,225.2 546.9,223.2 548.8,225.6 550.4,228.0 552.0,227.0 553.6,225.3 556.0,222.6 557.4,222.0 558.0,223.3 558.5,225.9 558.8,228.8 559.2,232.4 559.4,236.5 559.6,240.8 559.9,244.8 560.2,248.5 560.5,252.4 560.8,255.5 561.2,256.8 562.0,254.7 562.8,251.2 563.4,247.7 564.0,245.6 564.6,247.7 565.2,251.2 565.7,253.3 566.2,255.5 566.8,257.6 567.5,259.6 568.2,261.7 568.9,264.0 569.4,266.8 569.8,270.0 570.2,273.4 570.5,276.8 570.8,280.6 571.1,284.5 571.3,288.6 571.6,293.0 572.0,299.6 572.4,306.9 572.8,314.5 573.2,322.0 573.7,329.9 574.2,338.0 574.8,346.1 575.3,354.0 575.8,361.5 576.3,368.9 576.8,376.1 577.2,383.0 577.5,388.4 577.8,393.5 578.1,398.6 578.5,404.0 579.0,411.0 579.5,418.5 580.0,425.9 580.7,432.8 581.4,438.0 582.1,442.8 582.9,447.5 583.6,452.0 584.1,455.7 584.6,459.2 585.0,462.7 585.5,466.0 585.9,468.9 586.4,471.6 586.9,474.4 587.3,477.3 587.8,481.2 588.3,485.4 588.8,489.5 589.3,493.3 589.5,496.1 589.7,498.9 590.0,501.2 590.7,502.7 594.0,503.0 594.7,501.6 595.0,499.2 595.1,496.3 595.3,493.3 595.6,489.0 595.9,484.1 596.1,479.1 596.3,474.0 596.6,468.6 596.8,463.1 597.0,457.6 597.3,452.0 597.6,446.0 597.9,439.9 598.2,433.8 598.5,428.0 598.8,422.2 599.1,415.9 599.5,410.9 599.9,408.8 600.3,409.7 600.7,411.8 601.1,414.4 601.5,416.8 601.8,419.2 602.1,421.7 602.5,424.0 603.1,425.6 605.2,426.7 605.8,425.4 606.2,422.8 606.4,419.6 606.8,416.8 607.3,414.4 607.9,412.1 608.4,409.7 608.9,407.2 609.4,403.7 609.8,400.0 610.2,396.3 610.5,392.8 610.8,390.3 611.0,388.1 611.2,385.8 611.4,383.0 611.7,376.8 612.0,369.5 612.3,361.6 612.7,354.0 613.2,346.3 613.7,338.3 614.2,330.9 614.8,325.2 615.2,322.8 615.5,320.9 615.9,318.8 616.2,316.6 616.6,314.3 616.9,311.8 617.2,309.2 617.6,305.6 617.9,301.7 618.2,297.5 618.5,293.0 618.7,286.3 618.8,278.9 618.9,271.3 619.1,264.0 619.4,257.8 619.7,251.7 620.0,245.8 620.4,240.0 620.8,234.7 621.2,229.5 621.6,224.3 622.0,219.2 622.4,214.1 622.8,208.9 623.3,204.0 623.9,200.0 624.5,197.8 625.1,196.0 625.7,194.0 626.1,191.4 626.3,188.5 626.5,185.6 626.8,182.8 627.0,180.4 627.2,177.8 627.5,175.7 627.9,174.8 629.5,177.2 630.1,175.5 630.4,171.6 630.6,166.7 630.8,162.0 631.1,156.2 631.2,149.8 631.5,143.9 632.1,139.6 633.7,136.4 634.2,138.5 634.4,143.2 634.5,149.0 634.8,154.0 635.2,158.0 635.6,162.3 636.0,165.7 636.4,167.1 636.8,165.8 637.2,162.4 637.6,158.2 638.0,154.0 638.4,148.4 638.8,142.3 639.2,136.0 639.6,130.0 640.0,124.8 640.3,119.7 640.7,114.9 641.2,110.8 641.7,107.6 642.2,104.8 642.8,103.6 643.6,105.8 644.4,109.2 645.2,111.8 646.0,113.2 646.6,111.9 647.3,109.2 648.1,106.8 650.8,104.1 651.9,105.9 652.9,108.4 655.1,110.8 655.7,112.4 656.1,114.4 656.4,116.5 656.7,118.8 657.1,122.4 657.4,126.6 657.8,130.1 658.3,131.6 659.0,129.8 659.9,127.6 661.5,127.6 662.2,129.3 662.7,132.3 663.1,135.6 663.6,138.0 665.2,140.4 666.0,142.1 666.8,144.0 667.6,146.0 668.4,148.1 669.2,150.2 670.0,152.4 670.6,154.3 671.2,156.3 671.8,158.3 672.4,160.4 673.0,162.7 673.7,165.1 674.3,167.5 674.8,170.0 675.3,173.0 675.8,176.2 676.3,179.4 676.7,182.7 677.2,186.3 677.6,189.9 678.0,193.6 678.3,197.3 678.6,201.2 678.8,205.2 678.9,209.3 679.1,213.3 679.3,217.4 679.5,221.6 679.7,225.8 679.8,230.0 679.9,234.2 679.9,238.5 679.9,242.8 680.0,247.3 680.1,252.6 680.3,258.1 680.5,263.8 680.7,270.0 680.9,278.9 681.0,288.6 681.2,299.0 681.3,310.0 681.4,326.6 681.4,345.0 681.5,363.4 681.6,380.0 681.8,391.0 682.0,401.4 682.2,411.0 682.4,420.0 682.5,427.3 682.7,434.8 682.8,440.6 683.0,443.0 683.2,440.6 683.5,434.8 683.8,427.3 684.0,420.0 684.2,411.0 684.4,401.3 684.6,391.0 684.7,380.0 684.7,363.8 684.7,345.7 684.6,328.0 684.7,313.0 684.8,305.4 685.0,298.7 685.1,292.5 685.3,286.0 685.5,279.1 685.6,272.1 685.8,265.3 686.0,259.3 686.1,255.7 686.3,252.4 686.5,249.3 686.7,246.0 687.1,242.2 687.5,238.3 687.9,234.5 688.4,231.0 688.7,228.4 688.9,225.7 689.3,223.6 689.7,222.7 691.3,225.3 693.3,226.7 693.9,228.6 694.3,231.3 694.6,233.7 694.9,234.7 695.3,233.4 695.6,230.3 695.9,226.7 696.4,224.0 698.0,220.7 699.6,219.3 700.9,222.7 701.3,221.4 701.6,218.4 701.9,214.9 702.3,212.0 703.3,209.3 704.4,206.7 705.2,204.4 705.9,202.1 706.7,200.0 708.7,196.7 709.3,198.1 709.6,201.0 710.0,204.0 710.4,206.3 710.8,208.8 711.2,211.2 711.6,213.3 712.2,215.9 712.9,217.3 714.7,214.7 715.1,213.0 715.4,211.0 715.7,208.8 716.0,206.7 716.4,204.4 716.9,201.9 717.4,199.8 718.0,198.7 719.3,199.3 719.9,198.0 720.2,195.4 720.5,192.3 720.7,189.3 721.0,186.1 721.2,182.6 721.4,179.2 721.7,176.0 722.1,172.9 722.5,169.7 722.9,167.1 723.1,166.0" fill="none" stroke="#3636aa" stroke-width="1" stroke-linejoin="round"/>
<polyline points="65.0,104.0 65.7,104.7 67.6,106.4 69.9,108.6 72.0,110.4 74.1,112.0 76.3,113.6 78.4,115.1 80.0,116.2 81.7,117.3 82.7,120.1 84.1,119.1 85.9,122.4 87.3,121.9 88.7,124.7 90.6,127.1 92.0,130.8 92.9,128.0 93.8,129.8 94.8,132.2 96.2,132.7 97.2,134.7 98.1,136.4 99.5,135.0 100.3,136.7 100.9,139.2 101.8,141.1 103.2,139.7 104.1,142.4 105.5,145.0 106.7,146.9 108.0,149.0 109.1,151.6 110.0,154.0 111.0,155.5 112.0,159.0 113.2,161.0 114.5,163.0 115.8,165.4 117.0,168.0 118.0,170.7 119.0,173.5 119.7,175.7 120.4,177.9 121.0,180.0 121.8,182.5 122.5,185.0 123.1,187.4 123.6,190.0 123.9,192.6 124.2,195.6 124.6,198.8 125.0,202.0 125.7,205.6 126.5,209.2 127.3,213.0 128.0,217.0 128.6,222.0 129.1,227.4 129.5,232.8 130.0,238.0 130.5,242.6 130.9,247.0 131.4,251.5 132.0,256.0 132.7,260.9 133.4,265.9 134.2,271.0 135.0,276.0 135.7,281.0 136.5,285.9 137.2,290.9 138.0,296.0 139.0,301.5 140.0,307.0 141.0,312.5 142.0,318.0 142.8,323.1 143.5,328.3 144.2,333.3 145.0,338.0 145.7,341.6 146.4,345.0 147.2,348.3 148.0,352.0 149.1,357.2 150.4,362.8 151.7,368.5 153.0,374.0 154.2,378.7 155.4,383.3 156.6,387.7 158.0,392.0 159.4,395.8 160.8,399.4 162.4,402.9 164.0,406.0 165.4,408.3 166.8,410.5 168.3,412.5 170.0,414.0 172.2,415.3 174.7,416.2 177.0,416.4 179.1,415.8 181.1,414.5 183.0,413.0 184.8,411.3 186.5,409.2 188.2,407.1 190.0,405.0 192.0,403.0 194.1,401.0 196.2,399.0 198.0,397.0 199.4,395.3 200.7,393.7 201.9,391.9 203.0,390.0 204.4,387.2 205.6,384.2 206.8,381.0 208.0,378.0 209.0,375.4 210.0,372.9 211.0,370.5 212.0,368.0 213.0,365.4 213.9,362.9 214.9,360.3 216.0,358.0 217.1,356.0 218.3,354.0 219.6,352.3 221.0,351.0 223.5,349.7 226.0,349.4 228.0,350.5 230.0,352.0 232.0,353.3 234.0,354.0 235.9,353.0 237.9,351.0 240.0,349.0 241.8,347.4 243.7,345.5 245.4,344.0 247.0,343.4 250.0,346.0 251.3,348.9 252.6,351.0 254.2,349.7 256.0,348.0 259.0,349.0 260.1,347.7 261.0,345.4 262.0,343.0 263.0,341.3 264.0,339.5 265.0,337.7 266.0,336.0 267.2,334.1 268.5,332.2 269.6,330.0 270.6,327.0 271.4,323.4 272.1,319.7 273.0,316.0 274.1,312.0 275.3,308.0 276.6,303.9 278.0,300.0 279.4,296.4 280.9,292.9 282.4,289.5 284.0,286.0 285.7,282.5 287.4,279.0 289.2,275.5 291.0,272.0 292.8,268.5 294.5,265.0 296.3,261.5 298.0,258.0 299.5,254.7 301.0,251.3 302.4,248.0 304.0,245.0 305.4,242.6 306.9,240.3 308.4,238.1 310.0,236.0 311.7,234.0 313.5,232.0 315.2,230.1 317.0,228.0 318.9,225.3 320.7,222.5 322.5,219.6 324.4,217.2 326.0,215.6 327.7,214.3 329.3,213.0 330.8,211.6 332.1,209.9 333.3,208.2 334.5,206.4 335.6,204.4 336.8,201.9 338.0,199.3 339.2,196.6 340.4,194.0 341.5,191.7 342.7,189.5 343.9,187.3 345.2,185.2 346.7,183.1 348.3,181.1 350.0,179.2 351.6,177.2 353.2,175.0 354.9,172.7 356.5,170.6 358.0,169.2 360.4,168.4 361.1,169.5 361.4,171.5 361.7,173.9 362.0,176.4 362.4,179.9 362.8,183.8 363.2,187.6 363.6,190.8 364.1,194.0 364.7,195.6 365.0,194.7 365.4,192.6 365.7,190.0 366.0,187.6 366.3,185.2 366.7,182.6 367.0,180.5 367.3,179.6 367.5,181.2 367.6,184.3 368.0,186.0 370.0,182.8 370.7,180.8 371.2,178.3 371.8,175.7 372.4,173.2 373.1,170.8 373.8,168.5 374.7,166.2 375.6,164.4 377.1,162.4 378.8,161.2 381.1,161.6 383.6,162.8 385.5,163.7 387.4,164.8 389.2,166.0 390.9,167.5 392.4,169.1 394.0,170.8 395.6,172.7 397.1,174.6 398.8,176.4 400.6,177.8 402.6,179.1 404.4,180.4 406.1,181.9 407.7,183.5 409.2,185.2 410.4,186.8 411.7,188.7 412.9,190.4 414.0,191.6 416.4,192.7 418.3,191.5 420.4,190.0 422.7,189.5 425.2,189.2 427.6,188.9 430.0,188.7 432.0,188.6 434.0,188.5 436.0,188.7 438.1,189.4 440.3,190.5 442.4,191.6 444.6,192.8 446.7,194.2 448.8,195.6 450.7,197.1 452.6,198.7 454.4,200.6 456.0,202.6 457.7,204.8 459.3,207.1 460.8,209.6 462.5,212.6 464.2,215.8 465.7,219.1 467.2,222.4 468.5,225.6 469.7,228.7 470.9,231.9 472.0,235.2 473.1,238.7 474.1,242.3 475.1,246.0 476.0,249.6 476.9,253.2 477.7,256.7 478.5,260.3 479.2,264.0 479.9,267.9 480.5,271.9 481.1,276.0 481.6,280.0 482.0,284.1 482.4,288.2 482.7,292.3 483.0,296.0 483.3,298.6 483.5,300.9 483.7,303.3 484.0,306.0 484.4,310.7 484.8,315.9 485.2,321.4 485.6,326.8 486.0,332.4 486.4,338.0 486.8,343.6 487.2,349.2 487.6,354.6 488.0,359.9 488.4,365.1 488.8,370.0 489.1,373.7 489.4,377.1 489.7,380.5 490.0,384.0 490.4,387.8 490.9,391.6 491.4,395.4 492.0,399.2 492.6,402.9 493.2,406.7 493.8,410.2 494.4,412.8 495.3,415.5 496.8,412.0 497.6,409.1 498.4,405.4 499.2,401.4 500.0,397.6 500.7,394.4 501.3,391.2 501.9,388.0 502.5,385.0 502.9,382.3 503.3,379.8 503.6,377.2 504.0,374.8 504.4,372.6 504.9,370.5 505.4,368.5 505.9,366.8 507.5,363.9 508.6,365.6 509.6,368.4 510.6,371.9 511.5,374.0 512.1,372.6 512.8,370.0 513.5,368.0 514.4,365.9 515.2,363.6 516.0,361.4 516.8,359.1 517.7,356.6 518.4,354.0 519.1,350.6 519.7,347.0 520.3,343.3 520.8,339.6 521.4,335.6 521.9,331.4 522.4,327.3 522.9,323.6 523.2,320.8 523.5,318.0 523.9,315.6 524.5,314.0 526.1,313.2 526.8,314.8 527.2,317.6 527.7,320.4 528.4,322.7 529.1,325.0 529.9,326.0 530.7,324.6 531.6,321.9 532.5,320.4 533.4,321.4 534.3,323.6 535.2,326.0 536.0,328.4 536.8,331.2 537.6,333.9 538.4,336.4 539.4,338.9 540.4,341.1 541.6,342.8 544.0,344.0 544.7,342.8 545.2,340.5 545.6,338.0 546.0,335.3 546.3,332.3 546.7,329.3 547.2,326.8 548.0,324.3 549.1,322.8 552.0,323.8 553.9,326.0 555.0,329.2 555.5,327.8 556.0,325.0 556.7,322.8 558.3,321.7 559.1,323.9 559.9,326.8 562.8,329.2 563.9,330.8 565.0,332.6 566.0,334.8 566.9,337.6 567.8,340.8 568.5,344.2 569.2,347.6 569.9,351.1 570.5,354.7 571.1,358.4 571.6,362.0 572.1,365.7 572.5,369.4 572.8,373.0 573.2,376.4 573.5,378.8 573.8,381.1 574.1,383.4 574.3,386.0 574.6,391.0 574.8,396.7 575.0,402.8 575.3,408.8 575.8,415.1 576.3,421.4 576.9,427.8 577.5,434.0 578.1,439.6 578.6,445.1 579.3,450.6 580.0,456.0 580.9,461.4 582.0,466.9 583.0,472.2 584.0,477.3 584.7,481.5 585.4,485.6 586.1,489.6 586.7,493.3 587.1,496.6 587.4,500.0 587.8,502.8 588.4,504.0 589.7,502.7 590.3,500.9 590.7,498.4 591.3,496.0 592.2,493.9 593.1,491.8 594.0,489.3 594.7,485.9 595.2,482.1 595.6,478.0 596.0,474.0 596.3,470.0 596.5,466.0 596.7,461.9 596.9,458.0 597.1,454.3 597.4,450.6 597.6,447.1 598.0,444.0 598.4,441.1 598.8,438.6 599.6,436.8 601.5,436.0 602.1,437.1 602.5,439.1 602.8,441.6 603.1,444.0 603.6,447.0 604.1,450.4 604.6,453.2 605.2,454.4 606.0,453.1 606.8,450.4 607.3,447.5 607.7,443.9 608.0,440.0 608.4,436.0 608.9,431.4 609.4,426.5 610.0,421.6 610.5,416.8 611.0,412.3 611.5,407.8 611.9,403.4 612.4,399.2 612.8,395.6 613.2,392.0 613.6,388.5 614.0,385.0 614.4,381.3 614.8,377.6 615.2,373.9 615.6,370.0 616.1,365.4 616.5,360.5 617.0,355.7 617.5,350.8 618.0,345.9 618.6,341.0 619.1,336.2 619.6,331.6 620.0,327.4 620.3,323.0 620.7,319.5 621.2,318.0 622.8,321.2 623.9,324.4 624.3,323.1 624.6,319.9 624.8,316.0 625.2,312.4 625.7,309.2 626.4,305.9 627.0,302.7 627.6,299.6 628.0,297.1 628.5,294.6 628.9,292.2 629.3,290.0 629.8,287.7 630.3,285.6 630.8,283.2 631.4,280.0 632.0,276.2 632.6,273.0 633.2,271.7 633.6,272.6 634.0,274.8 634.4,277.6 634.8,280.0 635.3,283.2 635.7,286.3 636.1,287.7 636.5,286.0 636.8,282.1 637.1,277.5 637.7,273.6 638.3,271.4 638.9,269.3 639.6,267.4 640.4,265.8 643.0,263.0 645.3,261.8 648.0,264.7 648.9,266.4 649.8,268.4 650.6,270.5 651.3,272.7 651.9,275.0 652.4,277.3 652.9,279.7 653.3,282.0 653.6,284.4 653.9,287.0 654.3,289.2 654.9,290.7 657.1,291.5 657.9,293.2 658.5,295.5 659.3,297.5 660.6,299.2 662.0,300.7 663.0,302.6 664.0,304.7 664.9,307.0 665.8,309.5 666.7,312.0 667.5,313.9 668.3,315.7 669.1,317.5 670.0,319.3 671.1,321.3 672.3,323.2 673.3,325.3 674.1,327.2 674.8,329.1 675.4,331.2 676.0,333.3 676.5,335.8 676.9,338.4 677.3,341.2 677.6,344.0 677.9,347.4 678.2,351.0 678.5,354.8 678.7,358.7 678.9,363.8 679.1,369.1 679.3,374.6 679.5,380.0 679.8,384.9 680.1,389.7 680.4,394.7 680.7,400.0 681.1,407.8 681.4,416.2 681.7,424.9 682.0,433.3 682.3,442.5 682.5,452.6 682.7,460.7 683.0,464.0 683.2,462.3 683.5,458.0 683.8,452.3 684.0,446.7 684.3,437.7 684.5,427.2 684.7,416.5 685.0,406.7 685.2,399.4 685.4,392.3 685.7,385.7 686.0,380.0 686.3,376.9 686.6,374.2 686.9,371.7 687.3,369.3 687.7,367.0 688.1,364.7 688.6,362.6 689.3,361.3 691.3,360.7 692.7,362.0 694.7,359.3 696.7,362.7 698.7,365.3 699.2,364.0 699.6,361.3 700.0,358.7 700.6,356.4 701.2,354.2 702.0,352.0 703.3,349.3 704.7,346.7 705.7,343.9 706.7,341.3 708.7,338.4 711.3,340.7 713.3,339.7 714.7,340.7 717.3,338.0 718.7,335.3 719.7,336.7 720.2,335.6 720.5,333.2 720.9,330.4 721.3,328.0 722.3,324.6 722.9,322.7" fill="none" stroke="#c43a4a" stroke-width="1" stroke-linejoin="round"/>
<text x="393" y="529.6" text-anchor="middle" class="mono" font-size="9" fill="#222" letter-spacing="-0.77">Wavenumbers (cm-1)</text>
<text transform="translate(22.5,304) rotate(-90)" text-anchor="middle" class="mono" font-size="9" fill="#222" letter-spacing="-0.77">%Transmittance</text>
<polyline points="157.0,560.0 158.5,560.0 162.0,559.9 166.3,559.9 170.0,560.0 172.5,560.2 174.8,560.5 177.3,560.7 180.0,561.0 185.2,561.2 191.2,561.3 197.1,561.5 202.0,562.0 204.3,562.5 206.2,563.1 208.0,563.7 210.0,564.4 212.4,565.2 214.9,566.0 217.5,566.9 220.0,567.6 222.5,568.2 225.0,568.7 227.5,569.2 230.0,569.6 232.5,569.9 235.0,570.1 237.5,570.2 240.0,570.4 242.5,570.6 245.0,570.8 247.5,570.9 250.0,571.0 252.5,570.9 255.0,570.8 257.5,570.6 260.0,570.4 262.5,570.2 265.0,570.0 267.5,569.8 270.0,569.6 272.5,569.4 275.0,569.3 277.5,569.1 280.0,569.0 282.4,568.8 284.6,568.7 287.1,568.5 290.0,568.4 297.8,568.4 307.7,568.6 317.7,568.7 326.0,568.4 329.9,567.9 333.3,567.3 336.5,566.6 340.0,566.0 344.7,565.5 349.8,565.1 354.9,564.7 360.0,564.4 365.1,564.2 370.1,564.0 375.2,563.8 380.0,563.6 384.2,563.3 388.2,563.0 392.1,562.7 396.0,562.4 399.7,562.1 403.5,561.7 407.0,561.5 410.0,561.6 412.7,562.4 415.0,563.0 417.3,562.6 420.0,562.0 424.2,561.7 429.6,561.6 435.2,561.6 440.0,561.6 442.7,561.6 445.2,561.7 447.6,561.8 450.0,562.0 452.7,562.3 455.5,562.7 458.1,563.0 460.0,563.0 462.0,562.0 465.2,561.7 469.8,561.6 475.0,561.8 480.0,562.0 485.0,562.3 490.2,562.6 495.2,563.1 500.0,563.6 503.8,564.0 507.4,564.4 510.9,564.9 514.0,565.6 516.2,566.4 518.3,567.3 520.2,568.2 522.0,569.0 524.5,570.0 527.0,570.6 529.2,570.3 531.5,569.6 534.0,569.0 536.4,568.8 538.9,568.7 541.5,568.6 544.0,568.4 546.4,568.1 548.9,567.6 551.3,567.2 554.0,567.0 557.9,567.1 562.1,567.5 566.3,567.9 570.0,568.0 572.2,567.9 574.1,567.6 576.0,567.3 578.0,567.2 580.9,567.2 584.1,567.3 587.2,567.6 590.0,568.0 592.2,568.6 594.2,569.3 596.0,570.0 597.9,570.7 600.0,571.3 602.2,571.8 604.9,572.4 607.6,572.9 610.0,573.0 612.1,572.7 613.9,572.1 616.0,571.6 618.3,571.3 620.9,571.1 623.5,570.8 626.0,570.4 628.5,569.7 631.0,568.8 633.5,567.8 636.0,567.0 638.5,566.4 641.0,565.8 643.5,565.4 646.0,565.0 648.5,564.7 651.0,564.5 653.5,564.4 656.0,564.4 658.5,564.6 661.0,564.9 663.5,565.3 666.0,565.6 668.5,565.8 671.1,566.0 673.6,566.1 676.0,566.4 678.1,566.7 680.2,567.1 682.2,567.5 684.0,568.0 686.2,568.7 688.0,569.6 690.0,572.0 691.3,570.8 693.0,569.0 695.0,568.4 697.4,568.2 700.0,568.0 702.8,567.8 705.8,567.7 708.9,567.7 712.0,567.6 715.6,567.4 719.5,567.2 722.7,567.1 724.0,567.0" fill="none" stroke="#c44a55" stroke-width="0.9"/>
</svg>

<div id="task">
 <div style="left:0;top:0;width:56px;height:18.5px;border-radius:0 5px 6px 0;background:linear-gradient(#3f8f3f 0,#5cae5c 1.6px,#3f973f 4px,#3a8e3a 10px,#348634 15px,#2a702a 18.5px);box-shadow:1px 0 2px #1c3c94"></div>
 <svg style="left:6.5px;top:3.5px" width="12" height="11" viewBox="0 0 12 11"><path d="M1,1.5 Q3,0.4 5.2,1.6 L4.6,5 Q2.6,4 0.6,5 Z" fill="#e8532c"/><path d="M6,1.8 Q8,3 10.6,1.8 L10,5.2 Q7.6,6.2 5.4,5.2 Z" fill="#79c04a"/><path d="M0.4,5.8 Q2.4,4.8 4.4,5.8 L3.8,9.2 Q2,8.2 0,9.2 Z" fill="#4f8fe6"/><path d="M5.2,6 Q7.4,7 9.8,6 L9.2,9.4 Q7,10.4 4.6,9.4 Z" fill="#f4c531"/></svg>
 <span class="t" style="left:23.5px;top:3.4px;font-size:10.5px;font-weight:400;font-style:italic;color:#d4e8cc;font-family:'Liberation Sans','Noto Sans CJK SC',sans-serif;transform:skewX(-12deg)">开始</span>
 <div style="left:64.5px;top:4.5px;width:9.6px;height:9.6px;border-radius:5px;background:radial-gradient(circle,#fff27a 0,#e8c820 55%,#b89410)"><div style="left:2.6px;top:4.1px;width:4.4px;height:1.4px;background:#355"></div><div style="left:4.1px;top:2.6px;width:1.4px;height:4.4px;background:#355"></div></div>
 <div style="left:78.6px;top:4.5px;width:8.6px;height:8.6px;border-radius:5px;border:1.2px solid #7db8f4;background:#2d6fdc"></div>
 <div style="left:92px;top:4.5px;width:8.6px;height:9px;border-radius:2px;background:linear-gradient(135deg,#fff,#c8d4e6);border:0.6px solid #6f84b4"></div>
 <div class="tb" style="left:107px;width:92.5px"></div>
 <div style="left:113px;top:4px;width:6.6px;height:9.4px;background:linear-gradient(135deg,#e8f6ff,#7bc0e8);border:0.6px solid #3a66a8;border-radius:1px"></div>
 <span class="tbt" style="left:123.5px">庆大样品<span class="l"> - </span>记事本</span>
 <div class="tb" style="left:201.5px;width:89.5px"></div>
 <svg style="left:205px;top:4.6px" width="10" height="9" viewBox="0 0 10 9"><path d="M0.4,1.2 L3.6,1.2 L4.4,2.2 L9,2.2 L9,7.8 L0.4,7.8 Z" fill="#f7e58a" stroke="#b89a30" stroke-width="0.6"/></svg>
 <span class="tbt" style="left:216.5px;letter-spacing:-0.7px">NFT</span>
 <div style="left:293.6px;top:1.5px;width:92px;height:15.5px;border-radius:2px;background:linear-gradient(#1b4aa8,#1e52ba 4px,#2058c4)"></div>
 <svg style="left:297px;top:3.5px" width="11" height="11" viewBox="0 0 12 12"><polygon points="6,0.6 11.6,11 0.4,11" fill="#fff"/><polygon points="6,2.4 8,6.2 4,6.2" fill="#e02020"/><polygon points="4,6.2 6,10 1.9,10" fill="#22a030"/><polygon points="8,6.2 10.1,10 6,10" fill="#2040d0"/><polygon points="4,6.2 8,6.2 6,10" fill="#e8d020"/></svg>
 <span class="tbt" style="left:311px;letter-spacing:-0.72px;font-weight:bold">EZ OMNIC - [Wind...</span>
 <div style="left:704px;top:0;width:46px;height:18.5px;background:linear-gradient(#27aaf4 0,#1595ea 3px,#1290e6 12px,#0f7fd2 18.5px);border-left:1px solid #0d55b8"></div>
 <div style="left:672.6px;top:7px;width:8.6px;height:5.4px;background:#d4d4d4;border:0.6px solid #555;border-radius:1px"><div style="left:1px;top:1px;width:6.6px;height:1.2px;background:#666"></div><div style="left:1px;top:3px;width:6.6px;height:1.2px;background:#8a6a6a"></div></div>
 <div style="left:687px;top:4.4px;width:6.4px;height:9px;background:#fffef0;border:0.6px solid #555"><span class="t" style="left:1.3px;top:1px;font-size:7.2px;font-weight:bold;color:#806000;font-family:'Liberation Sans',sans-serif">?</span></div>
 <div style="left:699.6px;top:4px;width:10.4px;height:10.4px;border-radius:6px;background:radial-gradient(circle at 40% 40%,#7ccaf9,#2f8fe6 70%)"><svg style="left:0;top:0" width="10.4" height="10.4"><path d="M6.2,2.8 L3.8,5.2 L6.2,7.6" stroke="#fff" stroke-width="1.3" fill="none"/></svg></div>
 <div style="left:712.5px;top:4.6px;width:8px;height:8.4px;background:linear-gradient(135deg,#e8e8f4 10%,#3a2a6a 40%,#c03a4a 60%,#c8d8f0 95%)"></div>
 <span class="t" style="left:724.5px;top:5px;font-size:7.6px;color:#dcebfa;letter-spacing:-0.75px">11:13</span>
</div>

</div></body></html>
